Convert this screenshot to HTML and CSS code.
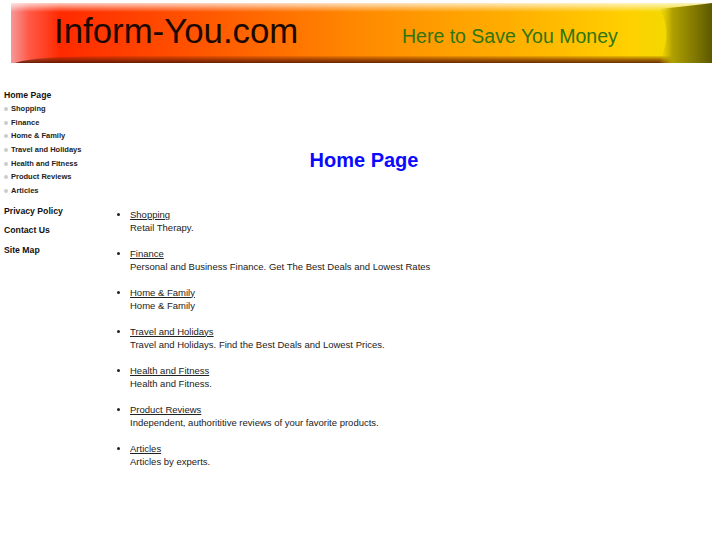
FILE: index.html
```html
<!DOCTYPE html>
<html>
<head>
<meta charset="utf-8">
<title>Inform-You.com - Home Page</title>
<link rel="stylesheet" href="styles.css">
</head>
<body>
<div class="banner">
  <svg width="701" height="60" viewBox="0 0 701 60" xmlns="http://www.w3.org/2000/svg">
    <defs>
      <linearGradient id="hg" x1="0" y1="0" x2="1" y2="0">
        <stop offset="0" stop-color="#f49a9a"/>
        <stop offset="0.025" stop-color="#ff5a48"/>
        <stop offset="0.07" stop-color="#ff2a00"/>
        <stop offset="0.28" stop-color="#ff5800"/>
        <stop offset="0.5" stop-color="#ff8a00"/>
        <stop offset="0.72" stop-color="#ffb000"/>
        <stop offset="0.88" stop-color="#ffd000"/>
        <stop offset="0.93" stop-color="#f4d800"/>
        <stop offset="1" stop-color="#e0c800"/>
      </linearGradient>
      <linearGradient id="top" x1="0" y1="0" x2="0" y2="1">
        <stop offset="0" stop-color="#ffffff" stop-opacity="0.75"/>
        <stop offset="1" stop-color="#ffffff" stop-opacity="0"/>
      </linearGradient>
      <linearGradient id="bot" x1="0" y1="0" x2="0" y2="1">
        <stop offset="0" stop-color="#5a1800" stop-opacity="0.1"/>
        <stop offset="0.5" stop-color="#6a2000" stop-opacity="0.6"/>
        <stop offset="1" stop-color="#4a1400" stop-opacity="0.85"/>
      </linearGradient>
      <linearGradient id="tab" x1="0" y1="0" x2="1" y2="0">
        <stop offset="0" stop-color="#d8c400" stop-opacity="0"/>
        <stop offset="0.25" stop-color="#b0a000"/>
        <stop offset="0.7" stop-color="#7e7600"/>
        <stop offset="1" stop-color="#5c5800"/>
      </linearGradient>
    </defs>
    <rect x="0" y="0" width="701" height="60" fill="url(#hg)"/>
    <rect x="0" y="0" width="701" height="9" fill="url(#top)"/>
    <path d="M4 60 C20 54 60 53 120 53 L701 53 L701 60 Z" fill="url(#bot)"/>
    <path d="M648 6 C668 4 686 2 701 0 L701 60 L648 60 C658 40 658 20 648 6 Z" fill="url(#tab)"/>
    <text x="43" y="39.5" class="logo">Inform-You.com</text>
    <text x="391" y="39.5" class="slogan">Here to Save You Money</text>
  </svg>
</div>

<div class="layout">
  <nav class="sidebar">
    <a class="main-link" href="#">Home Page</a>
    <ul class="sub">
      <li><a href="#">Shopping</a></li>
      <li><a href="#">Finance</a></li>
      <li><a href="#">Home &amp; Family</a></li>
      <li><a href="#">Travel and Holidays</a></li>
      <li><a href="#">Health and Fitness</a></li>
      <li><a href="#">Product Reviews</a></li>
      <li><a href="#">Articles</a></li>
    </ul>
    <a class="main-link gap" href="#">Privacy Policy</a>
    <a class="main-link gap2" href="#">Contact Us</a>
    <a class="main-link gap2" href="#">Site Map</a>
  </nav>

  <main class="content">
    <h1 class="title">Home Page</h1>
    <ul class="items">
      <li><a href="#">Shopping</a><span>Retail Therapy.</span></li>
      <li><a href="#">Finance</a><span>Personal and Business Finance. Get The Best Deals and Lowest Rates</span></li>
      <li><a href="#">Home &amp; Family</a><span>Home &amp; Family</span></li>
      <li><a href="#">Travel and Holidays</a><span>Travel and Holidays. Find the Best Deals and Lowest Prices.</span></li>
      <li><a href="#">Health and Fitness</a><span>Health and Fitness.</span></li>
      <li><a href="#">Product Reviews</a><span>Independent, authorititive reviews of your favorite products.</span></li>
      <li><a href="#">Articles</a><span>Articles by experts.</span></li>
    </ul>
  </main>
</div>
</body>
</html>
```

FILE: styles.css
```css
html, body {
  margin: 0;
  padding: 0;
  background: #ffffff;
}

body {
  font-family: "Liberation Sans", Arial, Helvetica, sans-serif;
  color: #222222;
}

.banner {
  margin: 3px 0 0 11px;
  width: 701px;
  height: 60px;
}

.banner svg {
  display: block;
}

.logo {
  font-family: "Liberation Sans", Arial, sans-serif;
  font-size: 34.8px;
  fill: #1c0800;
}

.slogan {
  font-family: "Liberation Sans", Arial, sans-serif;
  font-size: 19.5px;
  fill: #2f7510;
}

.layout {
  display: flex;
}

.sidebar {
  width: 110px;
  flex: none;
  padding: 26px 0 0 4px;
  box-sizing: border-box;
  display: flex;
  flex-direction: column;
  align-items: flex-start;
}

.main-link {
  font-size: 8.7px;
  font-weight: bold;
  line-height: 13px;
  color: #111111;
  text-decoration: none;
}

.main-link.gap {
  margin-top: 7px;
}

.main-link.gap2 {
  margin-top: 6.5px;
}

.sub {
  list-style: none;
  margin: 0;
  padding: 0;
}

.sub li {
  display: flex;
  align-items: center;
  line-height: 13.7px;
  height: 13.7px;
}

.sub li::before {
  content: "";
  width: 4px;
  height: 4px;
  border-radius: 50%;
  background: #cccccc;
  margin: 0 3px 0 0;
}

.sub a {
  font-size: 7.5px;
  font-weight: bold;
  color: #222222;
  text-decoration: none;
}

.content {
  flex: 1;
  padding-right: 109px;
}

.title {
  margin: 85px 0 0 0;
  text-align: center;
  font-size: 20px;
  line-height: 24px;
  font-weight: bold;
  color: #0a0aff;
}

.items {
  margin: 35.5px 0 0 0;
  padding: 0 0 0 20px;
  list-style: disc;
  font-size: 9.5px;
  line-height: 13px;
}

.items li {
  margin-bottom: 13px;
}

.items a {
  display: block;
  color: #222222;
  text-decoration: underline;
}

.items span {
  display: block;
}
```
